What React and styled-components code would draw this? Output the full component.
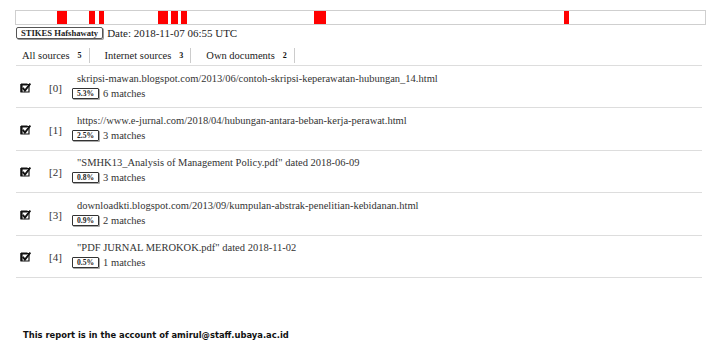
import styled, {createGlobalStyle} from 'styled-components';

const GlobalStyle = createGlobalStyle`
  html, body {
    margin: 0;
    padding: 0;
    background: #fff;
  }
  body {
    font-family: "Liberation Serif", "Times New Roman", serif;
    color: #333;
  }
`;

const marks = [
  {from: 57, to: 67},
  {from: 89, to: 95},
  {from: 99, to: 104},
  {from: 158, to: 168},
  {from: 171, to: 178},
  {from: 181, to: 187},
  {from: 314, to: 326},
  {from: 564, to: 569},
];

const sources = [
  {url: "skripsi-mawan.blogspot.com/2013/06/contoh-skripsi-keperawatan-hubungan_14.html", pct: "5.3%", matches: 6},
  {url: "https://www.e-jurnal.com/2018/04/hubungan-antara-beban-kerja-perawat.html", pct: "2.5%", matches: 3},
  {url: "\"SMHK13_Analysis of Management Policy.pdf\" dated 2018-06-09", pct: "0.8%", matches: 3},
  {url: "downloadkti.blogspot.com/2013/09/kumpulan-abstrak-penelitian-kebidanan.html", pct: "0.9%", matches: 2},
  {url: "\"PDF JURNAL MEROKOK.pdf\" dated 2018-11-02", pct: "0.5%", matches: 1},
];

const tabs = [
  {label: "All sources", count: 5},
  {label: "Internet sources", count: 3},
  {label: "Own documents", count: 2},
];

const CheckIcon = () => (
  <svg width="11" height="10" viewBox="0 0 11 10">
    <path d="M1 1.5 H9 V9 H1 Z" fill="none" stroke="#111" strokeWidth="1.2"/>
    <path d="M1 1.5 H7.5" stroke="#111" strokeWidth="2"/>
    <path d="M1.6 1 V9" stroke="#111" strokeWidth="2"/>
    <path d="M2.8 4.8 L4.9 7.6 L10.4 0.6" fill="none" stroke="#111" strokeWidth="1.9"/>
  </svg>
);

const App = () => {
  return <Page>
    <GlobalStyle/>
    <Bar>
      {marks.map((m, i) => (
        <Mark key={i} style={{left: m.from - 16, width: m.to - m.from}}/>
      ))}
    </Bar>
    <Header>
      <Owner>STIKES Hafshawaty</Owner>
      <DateText>Date: 2018-11-07 06:55 UTC</DateText>
    </Header>
    <Tabs>
      {tabs.map((t, i) => (
        <Tab key={i} first={i === 0}>
          {t.label}<Count>{t.count}</Count>
        </Tab>
      ))}
    </Tabs>
    <List>
      {sources.map((s, i) => (
        <Row key={i}>
          <Check><CheckIcon/></Check>
          <Index>[{i}]</Index>
          <Info>
            <Url>{s.url}</Url>
            <Matches>
              <Percent>{s.pct}</Percent>
              {s.matches} matches
            </Matches>
          </Info>
        </Row>
      ))}
    </List>
    <Footer>This report is in the account of amirul@staff.ubaya.ac.id</Footer>
  </Page>
}

const Page = styled.div`
  width: 720px;
  height: 340px;
  box-sizing: border-box;
  padding: 10px 0 0 15px;
  overflow: hidden;
`;

const Bar = styled.div`
  position: relative;
  width: 691px;
  height: 15px;
  box-sizing: border-box;
  border: 1px solid #cfcfcf;
  background: #fff;
`;

const Mark = styled.div`
  position: absolute;
  top: 0;
  bottom: 0;
  background: #ff0000;
`;

const Header = styled.div`
  display: flex;
  align-items: center;
  margin-top: 2px;
  height: 12px;
`;

const Owner = styled.div`
  box-sizing: border-box;
  height: 12px;
  padding: 0 4px;
  margin-left: 1px;
  border: 1px solid #555;
  border-radius: 2px;
  box-shadow: 1px 1px 0 #999;
  font-size: 8.6px;
  font-weight: bold;
  line-height: 10px;
  color: #222;
`;

const DateText = styled.div`
  margin-left: 4px;
  font-size: 11px;
  color: #222;
`;

const Tabs = styled.div`
  display: flex;
  margin-top: 9px;
  margin-left: 1px;
  width: 686px;
  height: 17px;
  border-bottom: 1px solid #ddd;
`;

const Tab = styled.div`
  display: flex;
  align-items: center;
  height: 15px;
  padding: 0 7px 0 ${p => p.first ? 6 : 15}px;
  border-right: 1px solid #ccc;
  font-size: 10.5px;
  color: #222;
`;

const Count = styled.span`
  margin-left: 8px;
  font-size: 8px;
  font-weight: bold;
  color: #111;
`;

const List = styled.div`
  margin-left: 1px;
  width: 686px;
`;

const Row = styled.div`
  display: flex;
  align-items: center;
  box-sizing: border-box;
  height: 42.4px;
  border-bottom: 1px solid #ddd;
`;

const Check = styled.div`
  display: flex;
  width: 11px;
  margin-left: 4px;
  margin-top: 2px;
`;

const Index = styled.div`
  width: 14px;
  margin-left: 18px;
  margin-top: 2px;
  font-size: 11px;
  color: #333;
`;

const Info = styled.div`
  display: flex;
  flex-direction: column;
  margin-left: 9px;
  margin-top: -3px;
`;

const Url = styled.div`
  font-size: 10.5px;
  line-height: 14px;
  color: #333;
  margin-left: 5px;
  white-space: nowrap;
`;

const Matches = styled.div`
  display: flex;
  align-items: center;
  margin-top: 2px;
  font-size: 10.5px;
  color: #333;
`;

const Percent = styled.span`
  box-sizing: border-box;
  height: 11px;
  padding: 0 4px;
  margin-right: 4px;
  border: 1px solid #333;
  border-radius: 1px;
  box-shadow: 1px 1px 0 #aaa;
  font-size: 7.6px;
  font-weight: bold;
  line-height: 9px;
  color: #222;
`;

const Footer = styled.div`
  margin-top: 51px;
  margin-left: 8px;
  font-family: "DejaVu Sans Condensed", "DejaVu Sans", sans-serif;
  font-stretch: condensed;
  font-size: 9.3px;
  font-weight: bold;
  color: #111;
`;

export default App;
